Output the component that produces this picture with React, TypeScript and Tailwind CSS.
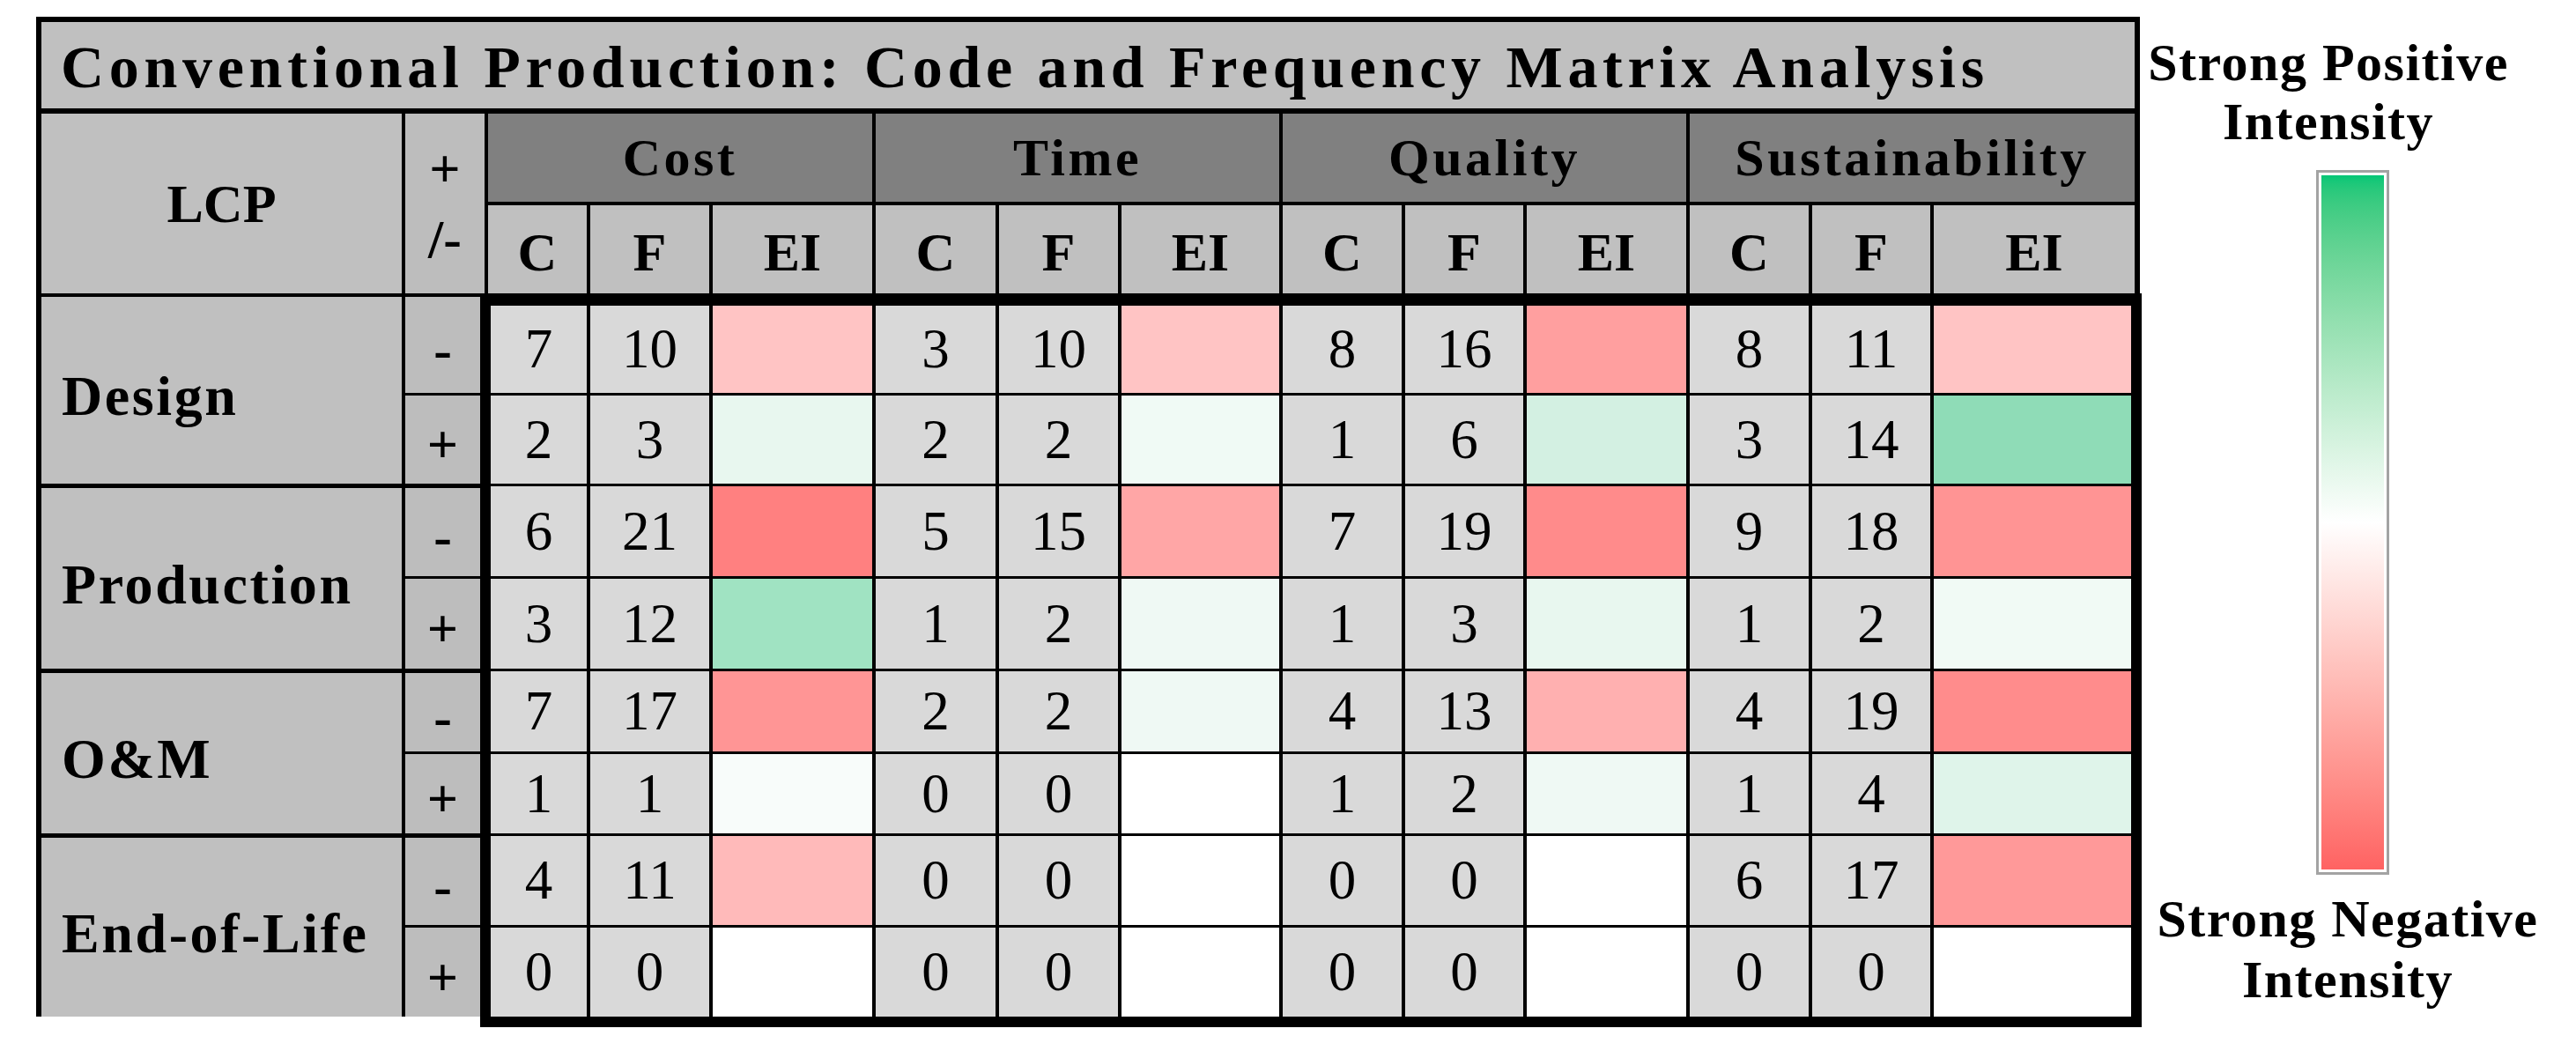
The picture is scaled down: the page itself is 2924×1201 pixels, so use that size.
import React from 'react';

type Cell = { c: number; f: number; ei: string };

interface StageRow {
  sign: '-' | '+';
  height: string;
  cells: Cell[];
}

interface Stage {
  name: string;
  rows: StageRow[];
}

// EI colours read off the heat map: red = negative, green = positive
const stages: Stage[] = [
  {
    name: 'Design',
    rows: [
      {
        sign: '-',
        height: 'h-[109px]',
        cells: [
          { c: 7, f: 10, ei: 'bg-[#ffc4c4]' },
          { c: 3, f: 10, ei: 'bg-[#ffc4c4]' },
          { c: 8, f: 16, ei: 'bg-[#ff9f9f]' },
          { c: 8, f: 11, ei: 'bg-[#ffc4c4]' },
        ],
      },
      {
        sign: '+',
        height: 'h-[100px]',
        cells: [
          { c: 2, f: 3, ei: 'bg-[#e8f7ef]' },
          { c: 2, f: 2, ei: 'bg-[#f0faf5]' },
          { c: 1, f: 6, ei: 'bg-[#d3f0e2]' },
          { c: 3, f: 14, ei: 'bg-[#8fdcb7]' },
        ],
      },
    ],
  },
  {
    name: 'Production',
    rows: [
      {
        sign: '-',
        height: 'h-[100px]',
        cells: [
          { c: 6, f: 21, ei: 'bg-[#ff8080]' },
          { c: 5, f: 15, ei: 'bg-[#ffa6a6]' },
          { c: 7, f: 19, ei: 'bg-[#ff8b8b]' },
          { c: 9, f: 18, ei: 'bg-[#ff9494]' },
        ],
      },
      {
        sign: '+',
        height: 'h-[102px]',
        cells: [
          { c: 3, f: 12, ei: 'bg-[#a0e3c2]' },
          { c: 1, f: 2, ei: 'bg-[#eff9f4]' },
          { c: 1, f: 3, ei: 'bg-[#e8f7ef]' },
          { c: 1, f: 2, ei: 'bg-[#f1faf5]' },
        ],
      },
    ],
  },
  {
    name: 'O&M',
    rows: [
      {
        sign: '-',
        height: 'h-[89px]',
        cells: [
          { c: 7, f: 17, ei: 'bg-[#ff9595]' },
          { c: 2, f: 2, ei: 'bg-[#eff9f4]' },
          { c: 4, f: 13, ei: 'bg-[#ffb0b0]' },
          { c: 4, f: 19, ei: 'bg-[#ff8c8c]' },
        ],
      },
      {
        sign: '+',
        height: 'h-[90px]',
        cells: [
          { c: 1, f: 1, ei: 'bg-[#f8fcfa]' },
          { c: 0, f: 0, ei: 'bg-white' },
          { c: 1, f: 2, ei: 'bg-[#eff9f4]' },
          { c: 1, f: 4, ei: 'bg-[#dff4ea]' },
        ],
      },
    ],
  },
  {
    name: 'End-of-Life',
    rows: [
      {
        sign: '-',
        height: 'h-[99px]',
        cells: [
          { c: 4, f: 11, ei: 'bg-[#ffbaba]' },
          { c: 0, f: 0, ei: 'bg-white' },
          { c: 0, f: 0, ei: 'bg-white' },
          { c: 6, f: 17, ei: 'bg-[#ff9999]' },
        ],
      },
      {
        sign: '+',
        height: 'h-[101px]',
        cells: [
          { c: 0, f: 0, ei: 'bg-white' },
          { c: 0, f: 0, ei: 'bg-white' },
          { c: 0, f: 0, ei: 'bg-white' },
          { c: 0, f: 0, ei: 'bg-white' },
        ],
      },
    ],
  },
];

const categories = ['Cost', 'Time', 'Quality', 'Sustainability'];

const serif = "font-['Liberation_Serif',serif]";

const HeaderBlock: React.FC = () => (
  <div className="bg-black px-[6px] pt-[6px]">
    <div className="h-[98px] bg-[#c0c0c0] flex items-center pl-[22px] pt-[4px]">
      <span className="text-[68px] leading-none font-bold tracking-[5.7px] text-black whitespace-nowrap">
        Conventional Production: Code and Frequency Matrix Analysis
      </span>
    </div>
    <div className="mt-[6px] grid grid-cols-[409px_90px_112px_135px_181px_136px_135px_179px_135px_134px_181px_135px_134px_228px] grid-rows-[100px_100px] gap-[4px]">
      <div className="row-span-2 bg-[#c0c0c0] flex items-center justify-center text-[62px] font-bold leading-none">
        LCP
      </div>
      <div className="row-span-2 bg-[#bdbdbd] flex flex-col items-center justify-center text-[62px] font-bold leading-[80px]">
        <span>+</span>
        <span>/-</span>
      </div>
      {categories.map((cat) => (
        <div
          key={cat}
          className="col-span-3 bg-[#808080] flex items-center justify-center text-[60px] font-bold leading-none tracking-[3.5px]"
        >
          {cat}
        </div>
      ))}
      {categories.map((cat) =>
        ['C', 'F', 'EI'].map((h) => (
          <div
            key={cat + h}
            className="bg-[#c0c0c0] flex items-center justify-center text-[62px] font-bold leading-none pt-[6px]"
          >
            {h}
          </div>
        ))
      )}
    </div>
  </div>
);

const StageLabels: React.FC = () => (
  <div className="w-[504px] bg-black pl-[6px] pt-[4px] flex flex-col gap-[5px]">
    {stages.map((stage) => (
      <div key={stage.name} className="flex gap-[4px]">
        <div className="w-[409px] bg-[#c0c0c0] flex items-center pl-[23px] pt-[14px] text-[64px] font-bold leading-none tracking-[2.6px]">
          {stage.name}
        </div>
        <div className="w-[85px] flex flex-col gap-[3px]">
          {stage.rows.map((row) => (
            <div
              key={row.sign}
              className={`${row.height} bg-[#bdbdbd] flex items-center justify-center text-[62px] font-bold leading-none pt-[10px]`}
            >
              {row.sign}
            </div>
          ))}
        </div>
      </div>
    ))}
  </div>
);

const DataGrid: React.FC = () => {
  const rows = stages.flatMap((s) => s.rows);
  return (
    <div className="w-[1886px] bg-black border-t-[14px] border-x-[12px] border-b-[12px] border-black">
      <div className="grid grid-cols-[109px_135px_181px_136px_135px_179px_135px_134px_181px_135px_134px_224px] grid-rows-[99px_100px_102px_102px_91px_90px_101px_101px] gap-x-[4px] gap-y-[3px]">
        {rows.map((row, ri) =>
          row.cells.map((cell, ci) => (
            <React.Fragment key={`${ri}-${ci}`}>
              <div className="bg-[#d9d9d9] flex items-center justify-center text-[63px] leading-none">
                {cell.c}
              </div>
              <div className="bg-[#d9d9d9] flex items-center justify-center text-[63px] leading-none">
                {cell.f}
              </div>
              <div className={cell.ei}></div>
            </React.Fragment>
          ))
        )}
      </div>
    </div>
  );
};

const Legend: React.FC = () => (
  <div className="ml-[9px] w-[460px] pt-[38px] flex flex-col items-center text-[60px] font-bold text-black tracking-[1.5px]">
    <div className="pr-[54px] text-center leading-[67px] whitespace-nowrap">
      <div>Strong Positive</div>
      <div>Intensity</div>
    </div>
    <div className="mt-[21px] w-[83px] h-[800px] border-[3px] border-[#a3a3a3] bg-white p-[3px]">
      <div className="w-full h-full bg-linear-to-b from-[#00c676] via-white to-[#ff6262]"></div>
    </div>
    <div className="mt-[16px] pr-[10px] text-center leading-[69px] whitespace-nowrap">
      <div>Strong Negative</div>
      <div>Intensity</div>
    </div>
  </div>
);

export default function App() {
  return (
    <div className={`w-[2924px] h-[1201px] bg-white flex items-start text-black ${serif}`}>
      <div className="ml-[41px] mt-[19px] w-[2390px]">
        <div className="w-[2388px]">
          <HeaderBlock />
        </div>
        <div className="flex items-start">
          <StageLabels />
          <DataGrid />
        </div>
      </div>
      <Legend />
    </div>
  );
}
